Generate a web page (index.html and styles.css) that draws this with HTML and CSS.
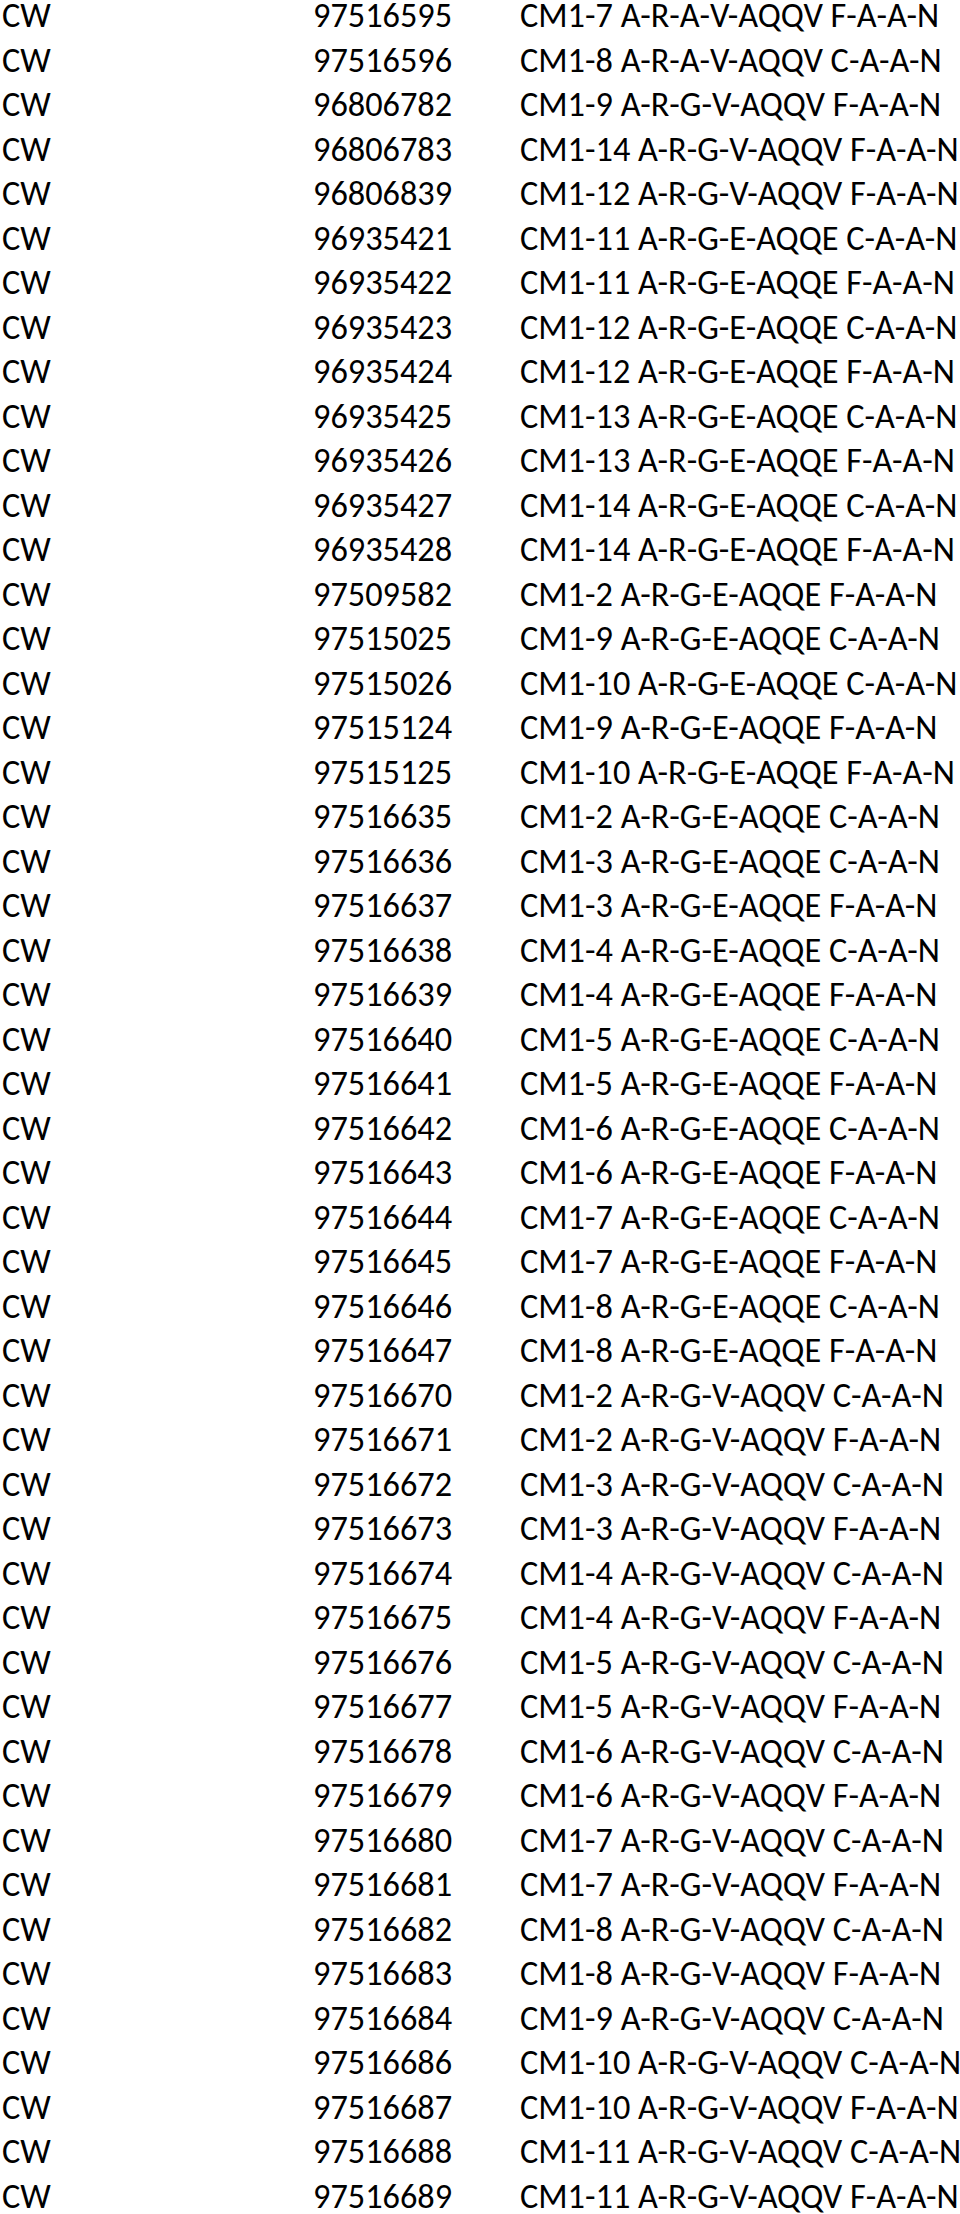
FILE: index.html
```html
<!DOCTYPE html>
<html>
<head>
<meta charset="utf-8">
<link rel="stylesheet" href="styles.css">
</head>
<body>
<div class="table">
<div class="row"><span>CW</span><span>97516595</span><span>CM1-7 A-R-A-V-AQQV F-A-A-N</span></div>
<div class="row"><span>CW</span><span>97516596</span><span>CM1-8 A-R-A-V-AQQV C-A-A-N</span></div>
<div class="row"><span>CW</span><span>96806782</span><span>CM1-9 A-R-G-V-AQQV F-A-A-N</span></div>
<div class="row"><span>CW</span><span>96806783</span><span>CM1-14 A-R-G-V-AQQV F-A-A-N</span></div>
<div class="row"><span>CW</span><span>96806839</span><span>CM1-12 A-R-G-V-AQQV F-A-A-N</span></div>
<div class="row"><span>CW</span><span>96935421</span><span>CM1-11 A-R-G-E-AQQE C-A-A-N</span></div>
<div class="row"><span>CW</span><span>96935422</span><span>CM1-11 A-R-G-E-AQQE F-A-A-N</span></div>
<div class="row"><span>CW</span><span>96935423</span><span>CM1-12 A-R-G-E-AQQE C-A-A-N</span></div>
<div class="row"><span>CW</span><span>96935424</span><span>CM1-12 A-R-G-E-AQQE F-A-A-N</span></div>
<div class="row"><span>CW</span><span>96935425</span><span>CM1-13 A-R-G-E-AQQE C-A-A-N</span></div>
<div class="row"><span>CW</span><span>96935426</span><span>CM1-13 A-R-G-E-AQQE F-A-A-N</span></div>
<div class="row"><span>CW</span><span>96935427</span><span>CM1-14 A-R-G-E-AQQE C-A-A-N</span></div>
<div class="row"><span>CW</span><span>96935428</span><span>CM1-14 A-R-G-E-AQQE F-A-A-N</span></div>
<div class="row"><span>CW</span><span>97509582</span><span>CM1-2 A-R-G-E-AQQE F-A-A-N</span></div>
<div class="row"><span>CW</span><span>97515025</span><span>CM1-9 A-R-G-E-AQQE C-A-A-N</span></div>
<div class="row"><span>CW</span><span>97515026</span><span>CM1-10 A-R-G-E-AQQE C-A-A-N</span></div>
<div class="row"><span>CW</span><span>97515124</span><span>CM1-9 A-R-G-E-AQQE F-A-A-N</span></div>
<div class="row"><span>CW</span><span>97515125</span><span>CM1-10 A-R-G-E-AQQE F-A-A-N</span></div>
<div class="row"><span>CW</span><span>97516635</span><span>CM1-2 A-R-G-E-AQQE C-A-A-N</span></div>
<div class="row"><span>CW</span><span>97516636</span><span>CM1-3 A-R-G-E-AQQE C-A-A-N</span></div>
<div class="row"><span>CW</span><span>97516637</span><span>CM1-3 A-R-G-E-AQQE F-A-A-N</span></div>
<div class="row"><span>CW</span><span>97516638</span><span>CM1-4 A-R-G-E-AQQE C-A-A-N</span></div>
<div class="row"><span>CW</span><span>97516639</span><span>CM1-4 A-R-G-E-AQQE F-A-A-N</span></div>
<div class="row"><span>CW</span><span>97516640</span><span>CM1-5 A-R-G-E-AQQE C-A-A-N</span></div>
<div class="row"><span>CW</span><span>97516641</span><span>CM1-5 A-R-G-E-AQQE F-A-A-N</span></div>
<div class="row"><span>CW</span><span>97516642</span><span>CM1-6 A-R-G-E-AQQE C-A-A-N</span></div>
<div class="row"><span>CW</span><span>97516643</span><span>CM1-6 A-R-G-E-AQQE F-A-A-N</span></div>
<div class="row"><span>CW</span><span>97516644</span><span>CM1-7 A-R-G-E-AQQE C-A-A-N</span></div>
<div class="row"><span>CW</span><span>97516645</span><span>CM1-7 A-R-G-E-AQQE F-A-A-N</span></div>
<div class="row"><span>CW</span><span>97516646</span><span>CM1-8 A-R-G-E-AQQE C-A-A-N</span></div>
<div class="row"><span>CW</span><span>97516647</span><span>CM1-8 A-R-G-E-AQQE F-A-A-N</span></div>
<div class="row"><span>CW</span><span>97516670</span><span>CM1-2 A-R-G-V-AQQV C-A-A-N</span></div>
<div class="row"><span>CW</span><span>97516671</span><span>CM1-2 A-R-G-V-AQQV F-A-A-N</span></div>
<div class="row"><span>CW</span><span>97516672</span><span>CM1-3 A-R-G-V-AQQV C-A-A-N</span></div>
<div class="row"><span>CW</span><span>97516673</span><span>CM1-3 A-R-G-V-AQQV F-A-A-N</span></div>
<div class="row"><span>CW</span><span>97516674</span><span>CM1-4 A-R-G-V-AQQV C-A-A-N</span></div>
<div class="row"><span>CW</span><span>97516675</span><span>CM1-4 A-R-G-V-AQQV F-A-A-N</span></div>
<div class="row"><span>CW</span><span>97516676</span><span>CM1-5 A-R-G-V-AQQV C-A-A-N</span></div>
<div class="row"><span>CW</span><span>97516677</span><span>CM1-5 A-R-G-V-AQQV F-A-A-N</span></div>
<div class="row"><span>CW</span><span>97516678</span><span>CM1-6 A-R-G-V-AQQV C-A-A-N</span></div>
<div class="row"><span>CW</span><span>97516679</span><span>CM1-6 A-R-G-V-AQQV F-A-A-N</span></div>
<div class="row"><span>CW</span><span>97516680</span><span>CM1-7 A-R-G-V-AQQV C-A-A-N</span></div>
<div class="row"><span>CW</span><span>97516681</span><span>CM1-7 A-R-G-V-AQQV F-A-A-N</span></div>
<div class="row"><span>CW</span><span>97516682</span><span>CM1-8 A-R-G-V-AQQV C-A-A-N</span></div>
<div class="row"><span>CW</span><span>97516683</span><span>CM1-8 A-R-G-V-AQQV F-A-A-N</span></div>
<div class="row"><span>CW</span><span>97516684</span><span>CM1-9 A-R-G-V-AQQV C-A-A-N</span></div>
<div class="row"><span>CW</span><span>97516686</span><span>CM1-10 A-R-G-V-AQQV C-A-A-N</span></div>
<div class="row"><span>CW</span><span>97516687</span><span>CM1-10 A-R-G-V-AQQV F-A-A-N</span></div>
<div class="row"><span>CW</span><span>97516688</span><span>CM1-11 A-R-G-V-AQQV C-A-A-N</span></div>
<div class="row"><span>CW</span><span>97516689</span><span>CM1-11 A-R-G-V-AQQV F-A-A-N</span></div>
</div>
</body>
</html>
```

FILE: styles.css
```css
html, body {
  margin: 0;
  padding: 0;
  background: #ffffff;
}
body {
  font-family: Carlito, Lato, "Open Sans", sans-serif;
  font-size: 34.3px;
  color: #000000;
  overflow: hidden;
}
.table {
  display: flex;
  flex-direction: column;
  padding-left: 2px;
}
.row {
  display: grid;
  grid-template-columns: 311px 207px 1fr;
  height: 44.51px;
  line-height: 31px;
  white-space: nowrap;
}
```
